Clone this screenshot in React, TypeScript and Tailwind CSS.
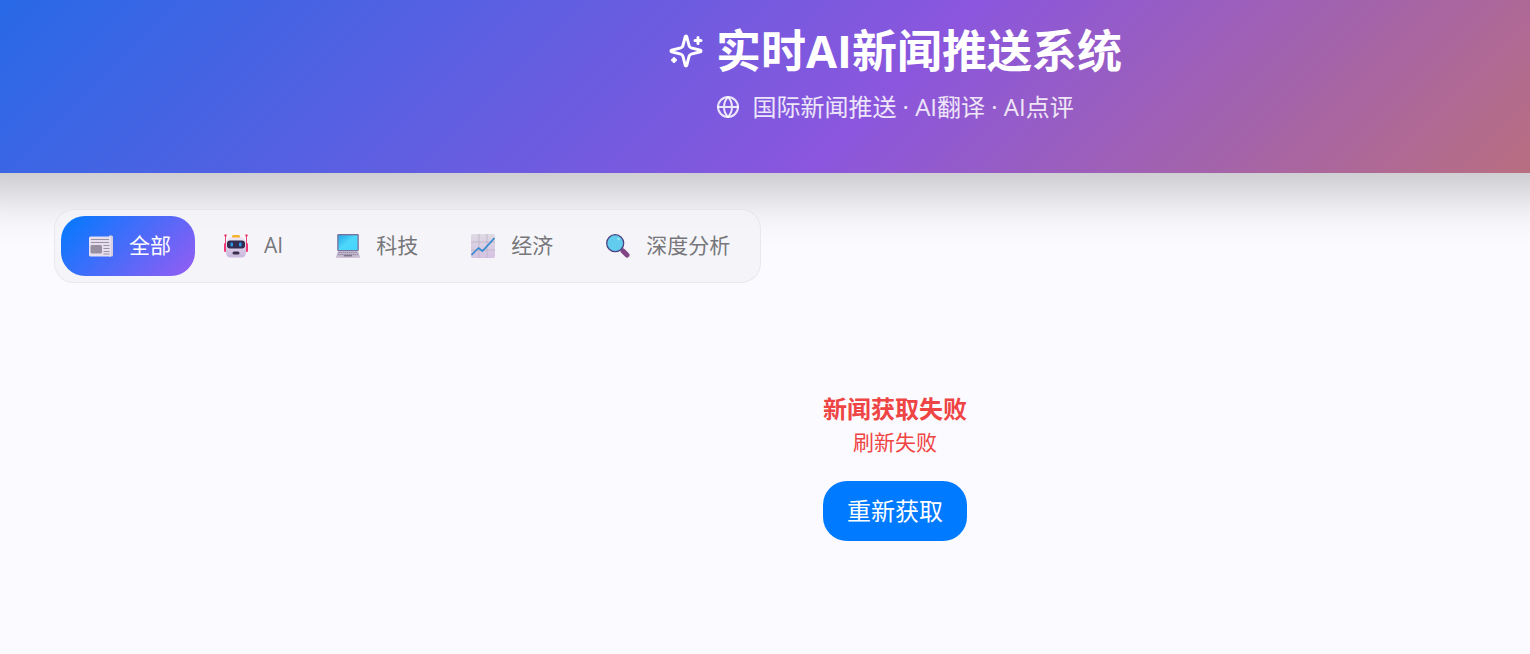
import { useState, type ReactNode } from "react";

function SparklesIcon() {
  return (
    <svg
      className="size-9 shrink-0"
      viewBox="0 0 24 24"
      fill="none"
      stroke="currentColor"
      strokeWidth="2"
      strokeLinecap="round"
      strokeLinejoin="round"
      aria-hidden="true"
    >
      <path d="M9.937 15.5A2 2 0 0 0 8.5 14.063l-6.135-1.582a.5.5 0 0 1 0-.962L8.5 9.936A2 2 0 0 0 9.937 8.5l1.582-6.135a.5.5 0 0 1 .963 0L14.063 8.5A2 2 0 0 0 15.5 9.937l6.135 1.581a.5.5 0 0 1 0 .964L15.5 14.063a2 2 0 0 0-1.437 1.437l-1.582 6.135a.5.5 0 0 1-.963 0z" />
      <path d="M20 3v4M22 5h-4M4 17v2M5 18H3" />
    </svg>
  );
}

function GlobeIcon() {
  return (
    <svg
      className="size-6 shrink-0"
      viewBox="0 0 24 24"
      fill="none"
      stroke="currentColor"
      strokeWidth="2"
      strokeLinecap="round"
      strokeLinejoin="round"
      aria-hidden="true"
    >
      <circle cx="12" cy="12" r="10" />
      <path d="M12 2a14.5 14.5 0 0 0 0 20 14.5 14.5 0 0 0 0-20M2 12h20" />
    </svg>
  );
}

function NewspaperIcon() {
  return (
    <svg className="size-6" viewBox="0 0 24 24" aria-hidden="true">
      <path d="M2 1.500H22.500a1.500 1.500 0 0 1 1.500 1.500V21a1.500 1.500 0 0 1-1.500 1.500H20V1.500z" fill="#d6cfe2" />
      <path d="M1.500 2.500H22V22.500H1.500A1.500 1.500 0 0 1 0 21V4A1.500 1.500 0 0 1 1.500 2.500z" fill="#e6e0ee" />
      <path d="M2 5.500h18M2 8.500h18M14.500 11.500h6M14.500 14.500h6M14.500 17.500h6M14.500 20h6" stroke="#9b93a5" strokeWidth="1" />
      <rect x="1.500" y="11" width="11.500" height="8.500" rx="1.500" fill="#998fa3" />
    </svg>
  );
}

function RobotIcon() {
  return (
    <svg className="size-6" viewBox="0 0 24 24" aria-hidden="true">
      <defs>
        <linearGradient id="robot-face" x1="0" y1="0" x2="0" y2="1">
          <stop offset="0" stopColor="#f0e9f5" />
          <stop offset="1" stopColor="#c9b6dc" />
        </linearGradient>
      </defs>
      <path d="M1.500 2v9M22.500 2v9" stroke="#e54b78" strokeWidth="1" />
      <circle cx="1.500" cy="1.500" r="1.200" fill="#ee3d71" />
      <circle cx="22.500" cy="1.500" r="1.200" fill="#ee3d71" />
      <rect x="0" y="9" width="3" height="9" rx="1.300" fill="#f23b76" />
      <rect x="21" y="9" width="3" height="9" rx="1.300" fill="#f23b76" />
      <path d="M6 3h12l4 5v10q0 5.500-5 5.500H7q-5 0-5-5.500V8z" fill="url(#robot-face)" />
      <path d="M8 3.500V2.500q0-1.500 1.500-1.500h5q1.500 0 1.500 1.500v1z" fill="#f6b32b" />
      <rect x="3" y="6.500" width="18" height="8" rx="3" fill="#332b50" />
      <rect x="6.500" y="8.500" width="2.500" height="4" rx="1" fill="#2a9ae8" />
      <rect x="15" y="8.500" width="2.500" height="4" rx="1" fill="#2a9ae8" />
      <rect x="8.500" y="17.500" width="7" height="3" rx="1.500" fill="#392e4b" />
    </svg>
  );
}

function LaptopIcon() {
  return (
    <svg className="size-6" viewBox="0 0 24 24" aria-hidden="true">
      <defs>
        <linearGradient id="laptop-screen" x1="0" y1="0" x2="1" y2="1">
          <stop offset="0" stopColor="#27a6e7" />
          <stop offset="0.500" stopColor="#4dd8fb" />
          <stop offset="1" stopColor="#42d5ff" />
        </linearGradient>
      </defs>
      <rect x="1.200" y="0" width="21.600" height="17" rx="1.200" fill="#79729b" />
      <rect x="2.500" y="1.300" width="19" height="14.700" fill="url(#laptop-screen)" />
      <path d="M2 17h20l2 6H0z" fill="#c4b8d0" />
      <path d="M2.500 18.500h19M2 20.500h20" stroke="#958ba1" strokeWidth="1" strokeDasharray="1.500 .6" />
      <path d="M8 21h8l.5 2h-9z" fill="#81778c" />
      <path d="M0 22.500h24V24H0z" fill="#d0c3d9" />
    </svg>
  );
}

function ChartIcon() {
  return (
    <svg className="size-6" viewBox="0 0 24 24" aria-hidden="true">
      <defs>
        <linearGradient id="chart-paper" x1="0" y1="0" x2="0" y2="1">
          <stop offset="0" stopColor="#dedae2" />
          <stop offset="1" stopColor="#d6c2e3" />
        </linearGradient>
      </defs>
      <rect width="24" height="24" rx="2" fill="url(#chart-paper)" />
      <path d="M8 0v24M16 0v24M0 8h24M0 16h24" stroke="#bdb1c7" strokeWidth=".8" />
      <path d="M.5 21 7.500 14l4 3L23.500 4" fill="none" stroke="#368bd0" strokeWidth="1.700" />
    </svg>
  );
}

function MagnifierIcon() {
  return (
    <svg className="size-6" viewBox="0 0 24 24" aria-hidden="true">
      <path d="m15 15 3 3" stroke="#56447a" strokeWidth="2" />
      <path d="m17 17 4 4" stroke="#814684" strokeWidth="5" strokeLinecap="round" />
      <circle cx="9.200" cy="9.200" r="8.500" fill="#61cced" stroke="#4d4584" strokeWidth="1.300" />
      <circle cx="12.500" cy="5" r="1.200" fill="#9fe4f6" />
    </svg>
  );
}

const tabs: { label: string; icon: ReactNode }[] = [
  { label: "全部", icon: <NewspaperIcon /> },
  { label: "AI", icon: <RobotIcon /> },
  { label: "科技", icon: <LaptopIcon /> },
  { label: "经济", icon: <ChartIcon /> },
  { label: "深度分析", icon: <MagnifierIcon /> },
];

export default function App() {
  const [active, setActive] = useState("全部");

  return (
    <div className="min-h-screen overflow-hidden bg-[#fbfbff] font-['Open_Sans','Noto_Sans_CJK_SC',sans-serif]">
      <div className="w-[117%]">
        <header className="flex flex-col items-center gap-3 bg-[linear-gradient(135deg,#2869e6_0%,#8b56dd_50%,#c9775f_100%)] pt-6 pb-12 text-white shadow-[0_-28px_48px_48px_rgba(0,0,0,0.22)]">
          <div className="flex items-center gap-3">
            <SparklesIcon />
            <h1 className="text-[45px] leading-[53px] font-bold">实时AI新闻推送系统</h1>
          </div>
          <div className="flex items-center gap-3 text-white/85">
            <GlobeIcon />
            <p className="text-2xl leading-9">国际新闻推送 · AI翻译 · AI点评</p>
          </div>
        </header>

        <main className="px-[54px] pt-9">
          <nav
            aria-label="新闻分类"
            className="relative flex w-fit gap-px rounded-[20px] border border-black/5 bg-[#f4f4f8]/80 p-1.5"
          >
            {tabs.map(({ label, icon }) => (
              <button
                key={label}
                type="button"
                aria-pressed={active === label}
                onClick={() => setActive(label)}
                className={
                  active === label
                    ? "flex h-[60px] items-center gap-3 rounded-3xl bg-[linear-gradient(135deg,#007aff,#965cf3)] px-6 text-[21px] text-white"
                    : "flex h-[60px] items-center gap-3 rounded-3xl px-6 text-[21px] text-[#77777b]"
                }
              >
                <span className="flex w-8 justify-center">{icon}</span>
                {label}
              </button>
            ))}
          </nav>

          <section className="flex flex-col items-center pt-27 pb-24 text-[#ef4444]">
            <h2 className="text-2xl leading-9 font-bold">新闻获取失败</h2>
            <p className="text-[21px] leading-[30px]">刷新失败</p>
            <button
              type="button"
              className="mt-6 h-[60px] rounded-3xl bg-[#007aff] px-6 text-2xl text-white"
            >
              重新获取
            </button>
          </section>
        </main>
      </div>
    </div>
  );
}
